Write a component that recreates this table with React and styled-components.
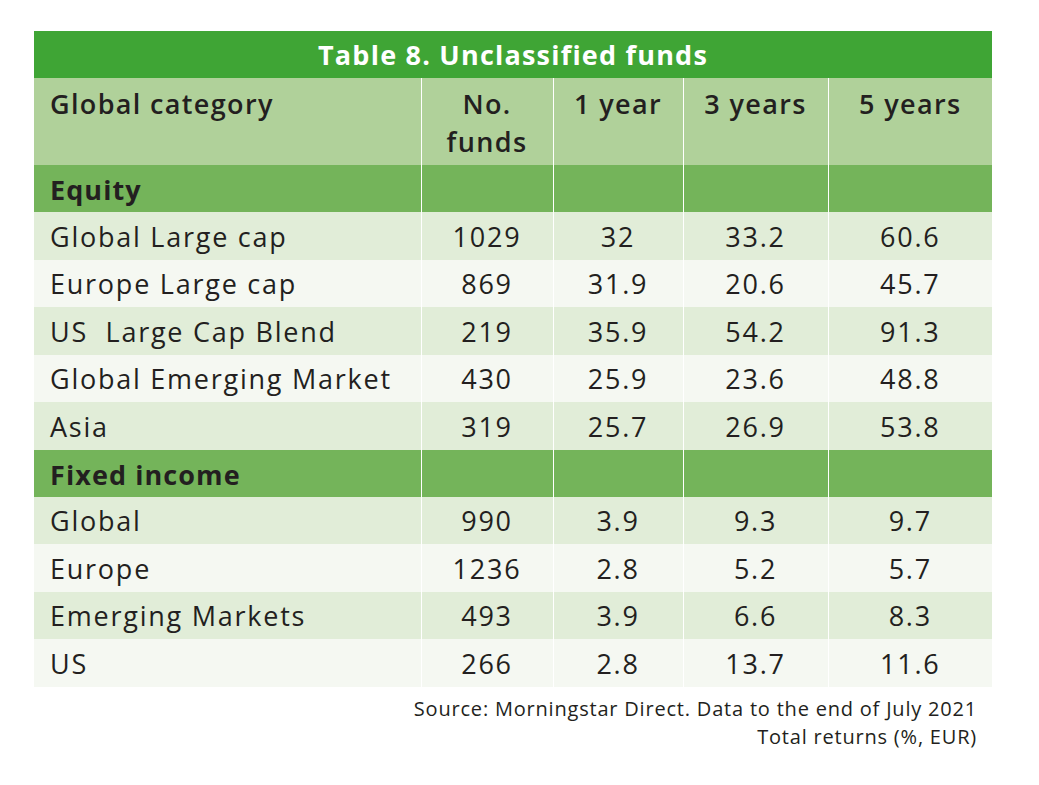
import React from 'react';
import styled, {createGlobalStyle} from 'styled-components';

const GlobalStyle = createGlobalStyle`
  body {
    margin: 0;
    background: #fff;
    font-family: 'Open Sans', 'Liberation Sans', sans-serif;
    color: #231f20;
  }
`;

const Page = styled.div`
  padding: 31px 47px 0 34px;
  width: 958px;
`;

const Table = styled.table`
  border-collapse: collapse;
  width: 958px;
  table-layout: fixed;
  font-size: 27px;
  letter-spacing: 0.065em;
`;

const Title = styled.th`
  background: #3fa535;
  color: #fff;
  font-size: 27px;
  font-weight: 700;
  letter-spacing: 0.045em;
  height: 47px;
  padding: 0;
  line-height: 47px;
  text-align: center;
`;

const HeadCell = styled.th`
  background: #b0d19a;
  font-weight: 600;
  letter-spacing: 0.05em;
  height: 87px;
  line-height: 38px;
  padding: 7px 0 0 ${props => (props.first ? '16px' : '0')};
  text-align: ${props => (props.first ? 'left' : 'center')};
  vertical-align: top;
  border-left: ${props => (props.first ? 'none' : '1px solid #fff')};
  box-sizing: border-box;
`;

const SectionCell = styled.td`
  background: #74b45a;
  font-weight: 700;
  letter-spacing: 0.04em;
  height: 47px;
  padding: 2px 0 0 ${props => (props.first ? '16px' : '0')};
  border-left: ${props => (props.first ? 'none' : '1px solid #fff')};
  box-sizing: border-box;
`;

const Cell = styled.td`
  background: ${props => (props.odd ? '#f5f8f2' : '#e1edd8')};
  font-weight: 400;
  height: 47.5px;
  padding: 1px 0 0 ${props => (props.first ? '16px' : '0')};
  text-align: ${props => (props.first ? 'left' : 'center')};
  border-left: ${props => (props.first ? 'none' : '1px solid #fff')};
  white-space: nowrap;
  box-sizing: border-box;
`;

const Note = styled.div`
  text-align: right;
  font-size: 20px;
  letter-spacing: 0.04em;
  line-height: 28px;
  padding: 8px 15px 0 0;
  color: #231f20;
`;

const sections = [
  {
    name: 'Equity',
    rows: [
      ['Global Large cap', '1029', '32', '33.2', '60.6'],
      ['Europe Large cap', '869', '31.9', '20.6', '45.7'],
      ['US\u00a0 Large Cap Blend', '219', '35.9', '54.2', '91.3'],
      ['Global Emerging Market', '430', '25.9', '23.6', '48.8'],
      ['Asia', '319', '25.7', '26.9', '53.8']
    ]
  },
  {
    name: 'Fixed income',
    rows: [
      ['Global', '990', '3.9', '9.3', '9.7'],
      ['Europe', '1236', '2.8', '5.2', '5.7'],
      ['Emerging Markets', '493', '3.9', '6.6', '8.3'],
      ['US', '266', '2.8', '13.7', '11.6']
    ]
  }
];

const widths = [387, 132, 130, 145, 164];

const App = () => (
  <Page>
    <GlobalStyle />
    <Table>
      <colgroup>
        {widths.map((w, i) => (
          <col key={i} style={{width: w}} />
        ))}
      </colgroup>
      <thead>
        <tr>
          <Title colSpan={5}>Table 8. Unclassified funds</Title>
        </tr>
        <tr>
          <HeadCell first>Global category</HeadCell>
          <HeadCell>
            No.
            <br />
            funds
          </HeadCell>
          <HeadCell>1 year</HeadCell>
          <HeadCell>3 years</HeadCell>
          <HeadCell>5 years</HeadCell>
        </tr>
      </thead>
      <tbody>
        {sections.map(section => (
          <React.Fragment key={section.name}>
            <tr>
              <SectionCell first>{section.name}</SectionCell>
              <SectionCell />
              <SectionCell />
              <SectionCell />
              <SectionCell />
            </tr>
            {section.rows.map((row, r) => (
              <tr key={row[0]}>
                {row.map((value, c) => (
                  <Cell key={c} first={c === 0} odd={r % 2 === 1}>
                    {value}
                  </Cell>
                ))}
              </tr>
            ))}
          </React.Fragment>
        ))}
      </tbody>
    </Table>
    <Note>
      Source: Morningstar Direct. Data to the end of July 2021
      <br />
      Total returns (%, EUR)
    </Note>
  </Page>
);

export default App;
